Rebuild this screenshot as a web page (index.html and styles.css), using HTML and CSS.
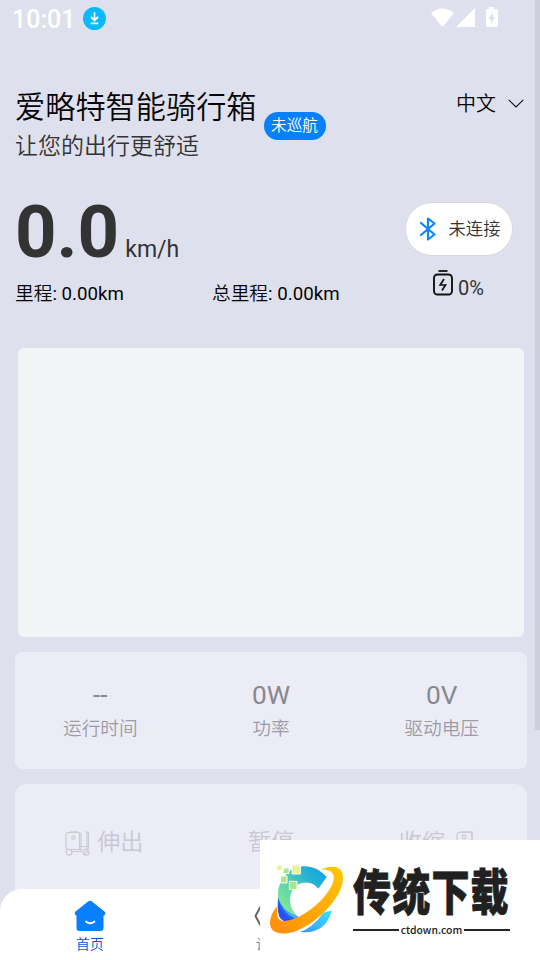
FILE: index.html
```html
<!DOCTYPE html>
<html lang="zh-CN">
<head>
<meta charset="utf-8">
<title>爱略特智能骑行箱</title>
<link rel="stylesheet" href="styles.css">
</head>
<body>
<div class="app">
  <header class="status">
    <span class="clock">10:01</span>
    <svg class="download" viewBox="0 0 24 24"><circle cx="12" cy="12" r="12" fill="#08b9fc"/><path d="M12 5.500v8M8.200 10.200l3.800 3.800 3.800-3.800M8 17h8" fill="none" stroke="#fff" stroke-width="1.800"/></svg>
    <svg class="signals" viewBox="0 0 68 22"><path d="M0 6Q11.500-3 23 6L11.500 20Z"/><path d="M44 1v19H25Z"/><path d="M58 0h5v2h3q1 0 1 1v16q0 1-1 1H56q-1 0-1-1V3q0-1 1-1h2Z"/><path d="M62 5l-4.500 7H60v5l4-7h-2.500Z" fill="#dfe0ed"/></svg>
  </header>
  <section class="heading">
    <div class="titles">
      <h1>爱略特智能骑行箱</h1>
      <p>让您的出行更舒适</p>
    </div>
    <span class="badge">未巡航</span>
    <div class="language"><span>中文</span><svg viewBox="0 0 16 9"><path d="M.7.8 8 8 15.300.8" fill="none" stroke="#111" stroke-width="1.100"/></svg></div>
  </section>
  <section class="ride">
    <div class="readout">
      <div class="speed"><strong>0.0</strong><span>km/h</span></div>
      <div class="mileage"><div>里程<span>: 0.00km</span></div><div>总里程<span>: 0.00km</span></div></div>
    </div>
    <div class="device">
      <div class="connect"><svg viewBox="0 0 16 24"><path d="M1 6l13.500 11.500L8 22.500V1.500L14.500 6.500 1 18" fill="none" stroke="#0a84ff" stroke-width="2.200" stroke-linejoin="round" stroke-linecap="round"/></svg><span>未连接</span></div>
      <div class="battery"><svg viewBox="0 0 20 26"><path d="M5.500 1h9" stroke="#111" stroke-width="1.800"/><rect x="1" y="4.500" width="18" height="20" rx="3.500" fill="none" stroke="#111" stroke-width="1.900"/><path d="M11 9l-3.800 6h5.300L9 20.500" fill="none" stroke="#111" stroke-width="1.700"/></svg><span>0%</span></div>
    </div>
  </section>
  <div class="map"></div>
  <section class="card metrics">
    <div><b>--</b><span>运行时间</span></div>
    <div><b>0W</b><span>功率</span></div>
    <div><b>0V</b><span>驱动电压</span></div>
  </section>
  <section class="card controls">
    <div><svg viewBox="0 0 25 25"><g fill="none" stroke="#cbcbd0" stroke-width="1.200"><rect x="1" y="1.500" width="15" height="17" rx="2"/><path d="M5 .8h8M14.500 2v16M3 18.500h13M7 20.500h9v-2M16 15.500h6M22 1v17M20 1h4M23.500 1v17"/><circle cx="8.500" cy="6.500" r="1.700"/><circle cx="4" cy="21.300" r="2.900"/><circle cx="21" cy="21.300" r="2.900"/><path d="M19 23l4-3"/></g></svg><span>伸出</span></div>
    <div><span>暂停</span></div>
    <div><span>收缩</span><svg viewBox="0 0 25 25"><g fill="none" stroke="#cbcbd0" stroke-width="1.200"><rect x="1" y="1.500" width="15" height="17" rx="2"/><path d="M4 .8h12v18"/><circle cx="8" cy="6" r="1.800"/></g></svg></div>
  </section>
</div>
<div class="scrollbar"></div>
<nav class="tabs">
  <div class="tab active"><svg viewBox="0 0 32 32"><path d="M14 1.500Q16 0 18 1.500L30.500 11.500Q32 13 31 14.500 30.500 15.500 29.500 15.500V28Q29.500 31 26.500 31H5.500Q2.500 31 2.500 28V15.500Q1.500 15.500 1 14.500 0 13 1.500 11.500Z" fill="#0880fe"/><path d="M12 21.500Q16 25 20.500 21.500" fill="none" stroke="#fff" stroke-width="1.800" stroke-linecap="round"/></svg><span>首页</span></div>
  <div class="tab"><svg viewBox="0 0 32 32"><path d="M8 4h16l6.500 12L24 28H8L1.500 16Z" fill="none" stroke="#666" stroke-width="2" stroke-linejoin="round"/><circle cx="16" cy="16" r="5" fill="none" stroke="#666" stroke-width="2"/></svg><span>设置</span></div>
  <div class="tab"></div>
</nav>
<aside class="watermark">
  <svg class="orbit" viewBox="15 30 255 240">
    <defs>
      <linearGradient id="arc" x1="0" y1="1" x2="1" y2="0"><stop offset=".1" stop-color="#8dee8b"/><stop offset=".4" stop-color="#5fd6a6"/><stop offset=".7" stop-color="#28b4cf"/><stop offset="1" stop-color="#109ded"/></linearGradient>
      <linearGradient id="ring" x1="0" y1="1" x2="1" y2="0"><stop stop-color="#ff8b08"/><stop offset="1" stop-color="#ffc805"/></linearGradient>
      <linearGradient id="foot" x1="0" y1="1" x2="1" y2="0"><stop stop-color="#3794fb"/><stop offset="1" stop-color="#3ce2fd"/></linearGradient>
    </defs>
    <path d="M200 81 175 116C151 83 90 95 90 151Q90 180 115 201L104 216C65 210 52 171 54 130 60 50 148 20 200 81Z" fill="url(#arc)"/>
    <path d="M54 142Q65 184 115 201L108 218Q67 219 58 201Q51 180 54 142Z" fill="#2164f5"/>
    <path d="M54 160Q72 202 106 218L80 218Q52 208 54 160Z" fill="#284fee"/>
    <path d="M54 142Q65 184 115 201L111 208Q70 195 54 142Z" fill="#48aaf8"/>
    <path d="M215 183Q196 254 119 246Q155 236 190 189Q200 182 215 183Z" fill="url(#foot)"/>
    <path d="M183 58C217 45 249 46 249 84C249 144 168 220 111 242C70 258 30 252 30 219Q30 193 52 167Q48 194 56 206C72 226 128 200 164 169C211 129 237 80 211 64Q201 58 183 58Z" fill="url(#ring)"/>
    <g stroke="#fff" stroke-width="3"><path fill="#e4f393" d="M96 45h25v27H96Z"/><path fill="#a9e789" d="M70 54h17v17H70ZM62 78h19v21H62ZM88 94h23v25H88Z"/><path fill="#e4f393" d="M51 45h15v17H51Z"/></g>
  </svg>
  <div class="brand"><strong>传统下载</strong><div class="domain"><i></i><span>ctdown.com</span><i></i></div></div>
</aside>
</body>
</html>
```
FILE: styles.css
```css
* { box-sizing: border-box; }
body {
  margin: 0; width: 540px; height: 960px; overflow: hidden;
  background: #dfe0ed; color: #050505;
  font-family: Roboto, "Noto Sans CJK SC", sans-serif; font-weight: 350;
}
svg { display: block; flex: none; }
.app { height: 960px; padding: 0 13px 0 15px; overflow: hidden; }
.status { height: 38px; display: flex; align-items: center; margin-left: -3px; color: #fff; }
.clock { font-size: 25px; font-weight: 500; width: 71px; }
.download { width: 23px; height: 23px; margin-top: -2px; }
.signals { width: 68px; height: 22px; margin: -2px 28px 0 auto; fill: #fff; }
.heading { height: 142px; padding-top: 48px; display: flex; align-items: flex-start; }
h1, p { margin: 0; font-weight: 350; white-space: nowrap; }
h1 { font-size: 30.200px; line-height: 43px; }
p { font-size: 23px; line-height: 35px; color: #333; }
.badge { margin: 26px 0 0 7px; width: 62px; height: 28px; border-radius: 14px; background: #0880fe; color: #fff; font-size: 15.700px; line-height: 28px; text-align: center; }
.language { margin: 3px 3px 0 auto; display: flex; align-items: center; gap: 12px; font-size: 20px; line-height: 30px; }
.language svg { width: 16px; height: 9px; margin-top: -2px; }
.ride { height: 168px; display: flex; justify-content: space-between; }
.speed { height: 99px; display: flex; align-items: baseline; color: #333; gap: 6px; padding-top: 11px; }
.speed strong { font-size: 72.500px; line-height: 84px; font-weight: 700; }
.speed span { font-size: 23px; font-weight: 400; }
.mileage { display: flex; font-size: 18.700px; line-height: 30px; }
.mileage div:first-child { width: 197px; }
.mileage span { font-weight: 400; }
.device { width: 108px; margin: 22px 14px 0 0; }
.connect { height: 54px; border: 1px solid #d9d9dc; border-radius: 27px; background: #fff; display: flex; align-items: center; justify-content: center; gap: 13px; padding-left: 2px; font-size: 17.300px; color: #333; }
.connect svg { width: 16px; height: 24px; }
.connect span { margin-top: -4px; }
.battery { display: flex; gap: 5px; margin: 14px 0 0 28px; color: #333; font-size: 20px; font-weight: 400; }
.battery svg { width: 20px; height: 26px; }
.battery span { line-height: 36px; }
.map { height: 289px; margin: 0 3px; background: #f3f4f6; border-radius: 6px; }
.card { background: #ececf6; display: grid; grid-template-columns: repeat(3, 1fr); }
.metrics { height: 117px; margin-top: 15px; border-radius: 8px; padding-top: 25px; text-align: center; }
.metrics b { display: block; font-size: 26.300px; line-height: 36px; font-weight: 400; color: #88888f; }
.metrics span { display: block; font-size: 18.700px; line-height: 32px; color: #9c9ca5; }
.controls { height: 176px; margin-top: 15px; border-radius: 12px; padding-top: 41px; color: #c8c8d1; font-size: 23px; line-height: 36px; }
.controls div { display: flex; justify-content: center; gap: 7px; }
.controls div:first-child { padding-left: 8px; }
.controls div:last-child { gap: 11px; padding-right: 4px; }
.controls svg { width: 25px; height: 25px; margin-top: 6px; }
.scrollbar { position: fixed; top: 0; right: 0; width: 5px; height: 730px; background: #cdcedb; }
.tabs { position: fixed; left: 0; right: 0; bottom: 0; height: 71px; border-radius: 22px 22px 0 0; background: #fff; display: grid; grid-template-columns: repeat(3, 1fr); }
.tab { display: flex; flex-direction: column; align-items: center; padding-top: 11px; font-size: 14px; line-height: 24px; color: #777; }
.tab svg { width: 32px; height: 32px; }
.active { color: #164bd0; }
.watermark { position: fixed; right: 0; bottom: 0; width: 280px; height: 120px; background: #fff; display: flex; }
.orbit { width: 85px; height: 80px; margin: 20px 3px 0 5px; }
.brand { width: 157px; padding-top: 30px; }
.brand strong { display: block; font-family: "Noto Sans CJK SC", sans-serif; font-size: 38px; letter-spacing: 1.200px; line-height: 40px; height: 53px; font-weight: 900; color: #202020; -webkit-text-stroke: .6px #202020; transform: scaleY(1.280); transform-origin: 50% 20px; white-space: nowrap; }
.domain { display: flex; align-items: center; gap: 2px; font-family: "Noto Sans CJK SC", sans-serif; font-size: 10.400px; font-weight: 500; line-height: 14px; color: #222; }
.domain i { flex: 1; height: 2px; background: #282424; }
```
